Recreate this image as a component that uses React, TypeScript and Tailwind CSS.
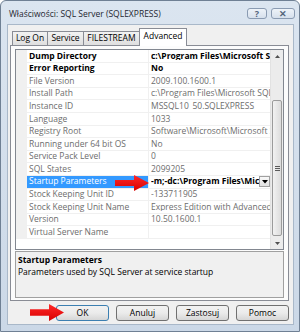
import React from 'react';

type Row = { name: string; value: string; bold?: boolean; selected?: boolean };

const rows: Row[] = [
    { name: 'Dump Directory', value: 'c:\\Program Files\\Microsoft SQL S', bold: true },
    { name: 'Error Reporting', value: 'No', bold: true },
    { name: 'File Version', value: '2009.100.1600.1' },
    { name: 'Install Path', value: 'c:\\Program Files\\Microsoft SQL S' },
    { name: 'Instance ID', value: 'MSSQL10_50.SQLEXPRESS' },
    { name: 'Language', value: '1033' },
    { name: 'Registry Root', value: 'Software\\Microsoft\\Microsoft S' },
    { name: 'Running under 64 bit OS', value: 'No' },
    { name: 'Service Pack Level', value: '0' },
    { name: 'SQL States', value: '2099205' },
    { name: 'Startup Parameters', value: '-m;-dc:\\Program Files\\Micros', bold: true, selected: true },
    { name: 'Stock Keeping Unit ID', value: '-133711905' },
    { name: 'Stock Keeping Unit Name', value: 'Express Edition with Advanced S' },
    { name: 'Version', value: '10.50.1600.1' },
    { name: 'Virtual Server Name', value: '' },
];

const tabs = [
    { label: 'Log On', w: 'w-[36px]' },
    { label: 'Service', w: 'w-[37px]' },
    { label: 'FILESTREAM', w: 'w-[57px]' },
];

function RedArrow({ className }: { className: string }) {
    return (
        <svg className={className} viewBox="0 0 34 16" preserveAspectRatio="none">
            <defs>
                <linearGradient id="ar" x1="0" y1="0" x2="0" y2="1">
                    <stop offset="0" stopColor="#ff2a2a" />
                    <stop offset="1" stopColor="#d80000" />
                </linearGradient>
            </defs>
            <polygon points="0,5 19,5 19,0 34,8 19,16 19,11 0,11" fill="url(#ar)" />
        </svg>
    );
}

function TitleButton({ children, w }: { children: React.ReactNode; w: string }) {
    return (
        <div
            className={`${w} h-[11px] rounded-[3px] border border-[#8a9bb2] bg-gradient-to-b from-[#eef3f9] to-[#d6e0ec] flex items-center justify-center text-[#55657c] text-[9px] font-bold leading-none`}
        >
            {children}
        </div>
    );
}

function Button({ label, primary }: { label: string; primary?: boolean }) {
    return (
        <div
            className={`w-[53px] h-[16px] rounded-[3px] border bg-gradient-to-b from-[#f2f2f2] via-[#ebebeb] to-[#d6d6d6] flex items-center justify-center text-[8.5px] text-black leading-none ${
                primary ? 'border-[#3c7fb1]' : 'border-[#707070]'
            }`}
        >
            {label}
        </div>
    );
}

export default function App() {
    return (
        <div
            className="relative w-[300px] h-[332px] bg-gradient-to-b from-[#dbe5f0] to-[#cbd8e7] border border-[#6f8094] rounded-t-[6px] flex flex-col text-black"
            style={{ fontFamily: '"Open Sans", "Noto Sans", sans-serif' }}
        >
            {/* title bar */}
            <div className="h-[23px] flex items-center pl-[8px] pr-[4px]">
                <span className="text-[8.5px] text-[#1e2630] flex-1 pt-[3px]">Właściwości: SQL Server (SQLEXPRESS)</span>
                <div className="flex gap-[4px] self-start mt-[7px]">
                    <TitleButton w="w-[20px]">?</TitleButton>
                    <TitleButton w="w-[24px]">✕</TitleButton>
                </div>
            </div>

            {/* client */}
            <div className="flex-1 ml-[6px] mr-[5px] mb-[6px] bg-[#f0f0f0] border border-[#a9b8c9] flex flex-col pl-[2px] pr-[4px]">
                {/* tabs */}
                <div className="flex items-end h-[20px] pl-[2px] relative z-10">
                    {tabs.map((t) => (
                        <div
                            key={t.label}
                            className={`${t.w} h-[14px] border border-b-0 border-[#898c95] bg-gradient-to-b from-[#f2f2f2] to-[#dfdfdf] flex items-center justify-center text-[8.5px] leading-none -mr-[1px]`}
                        >
                            {t.label}
                        </div>
                    ))}
                    <div className="w-[48px] h-[18px] border border-b-0 border-[#898c95] bg-white flex items-start pt-[3px] justify-center text-[8.5px] leading-none -mb-[1px]">
                        Advanced
                    </div>
                </div>

                {/* tab panel */}
                <div className="h-[256px] border border-[#898c95] bg-[#fcfcfc] flex flex-col px-[4px] pt-[3px]">
                    {/* grid */}
                    <div className="h-[201px] border border-[#828790] bg-white flex">
                        <div className="flex-1 min-w-0 flex flex-col">
                            {rows.map((r) => (
                                <div key={r.name} className="h-[12.6px] flex text-[8.5px] leading-none">
                                    <div className="w-[11px] shrink-0 bg-[#f0f0f0]" />
                                    <div
                                        className={`w-[122px] shrink-0 flex items-center pl-[2px] border-b border-r border-[#f0f0f0] whitespace-nowrap overflow-hidden ${
                                            r.selected ? 'bg-[#3399ff] text-white' : r.bold ? 'font-bold text-black' : 'text-[#6d6d6d]'
                                        }`}
                                    >
                                        {r.name}
                                    </div>
                                    <div
                                        className={`flex-1 min-w-0 flex items-center pl-[2px] border-b border-[#f0f0f0] whitespace-nowrap overflow-hidden ${
                                            r.bold ? 'font-bold text-black' : 'text-[#6d6d6d]'
                                        }`}
                                    >
                                        <span className="flex-1 min-w-0 overflow-hidden">{r.value}</span>
                                        {r.selected && (
                                            <div className="w-[11px] h-[11px] shrink-0 border border-[#a0a0a0] bg-gradient-to-b from-[#f8f8f8] to-[#e2e2e2] flex items-center justify-center">
                                                <svg width="6" height="4" viewBox="0 0 6 4">
                                                    <polygon points="0,0 6,0 3,3.5" fill="#000" />
                                                </svg>
                                            </div>
                                        )}
                                    </div>
                                </div>
                            ))}
                        </div>
                        {/* scrollbar */}
                        <div className="w-[13px] shrink-0 bg-[#ececec] border-l border-[#e2e2e2] flex flex-col">
                            <div className="h-[12px] flex items-center justify-center">
                                <svg width="5" height="3" viewBox="0 0 5 3">
                                    <polygon points="0,3 5,3 2.5,0" fill="#505050" />
                                </svg>
                            </div>
                            <div className="flex-1 flex flex-col pt-[38px] pb-[1px]">
                                <div className="flex-1 mx-[1px] rounded-[2px] border border-[#9b9b9b] bg-gradient-to-r from-[#f2f2f2] to-[#dcdcdc] flex items-center justify-center">
                                    <div className="w-[5px] flex flex-col gap-[1px]">
                                        <div className="h-px bg-[#5b5b5b]" />
                                        <div className="h-px bg-[#5b5b5b]" />
                                        <div className="h-px bg-[#5b5b5b]" />
                                    </div>
                                </div>
                            </div>
                            <div className="h-[12px] flex items-center justify-center">
                                <svg width="5" height="3" viewBox="0 0 5 3">
                                    <polygon points="0,0 5,0 2.5,3" fill="#505050" />
                                </svg>
                            </div>
                        </div>
                    </div>

                    {/* description */}
                    <div className="mt-[1px] h-[47px] border border-[#a0a0a0] bg-[#f0f0f0] px-[2px] pt-[4px] flex flex-col gap-[3px] text-[8.5px] leading-none">
                        <span className="font-bold">Startup Parameters</span>
                        <span>Parameters used by SQL Server at service startup</span>
                    </div>
                </div>

                {/* buttons */}
                <div className="flex justify-end gap-[7px] mt-[4px]">
                    <Button label="OK" primary />
                    <Button label="Anuluj" />
                    <Button label="Zastosuj" />
                    <Button label="Pomoc" />
                </div>
            </div>

            <RedArrow className="absolute left-[114px] top-[174px] w-[34px] h-[16px]" />
            <RedArrow className="absolute left-[29px] top-[303px] w-[34px] h-[17px]" />
        </div>
    );
}
